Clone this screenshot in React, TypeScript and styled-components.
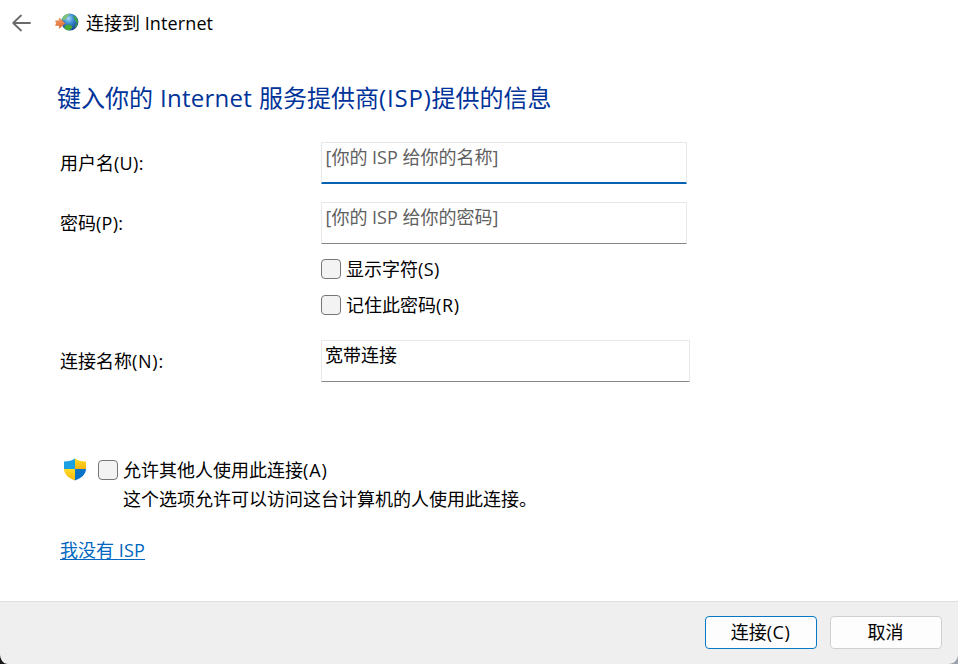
import React from "react";
import styled, { createGlobalStyle } from "styled-components";

const GlobalStyle = createGlobalStyle`
  *, *::before, *::after { box-sizing: border-box; }
  html, body { margin: 0; background: #fff; }
  body {
    font-family: "Open Sans", "Noto Sans CJK SC", sans-serif;
    font-size: 18px;
    font-weight: 400;
    color: #000;
    overflow: hidden;
  }
`;

const Window = styled.div`
  width: 958px;
  height: 664px;
  display: flex;
  flex-direction: column;
  background: #fff;
`;

const TitleBar = styled.header`
  height: 46px;
  padding-left: 12px;
  display: flex;
  align-items: center;
  line-height: 24px;
`;

const BackButton = styled.button`
  width: 19px;
  height: 20px;
  margin-right: 24px;
  padding: 0;
  border: 0;
  background: none;
  display: flex;
  align-items: center;
`;

const TitleText = styled.span`
  margin-left: 7px;
  white-space: nowrap;
`;

const Latin = styled.span<{ $spacing?: number }>`
  letter-spacing: ${(p) => p.$spacing ?? 0}px;
`;

const Content = styled.main`
  flex: 1;
  min-height: 0;
  padding: 36px 0 0 60px;
  display: flex;
  flex-direction: column;
  align-items: flex-start;
`;

const Heading = styled.h1`
  margin: 0 0 28px -3px;
  font-size: 24px;
  font-weight: 400;
  line-height: 32px;
  color: #003399;
  word-spacing: 0.8px;
  white-space: nowrap;
`;

const Credentials = styled.div`
  display: grid;
  row-gap: 18px;
`;

const FieldRow = styled.div`
  display: grid;
  grid-template-columns: 261px auto;
`;

const Label = styled.label`
  line-height: 42px;
  white-space: nowrap;
`;

const Field = styled.div<{ $focused?: boolean; $wide?: boolean; $filled?: boolean }>`
  width: ${(p) => (p.$wide ? 369 : 366)}px;
  height: 42px;
  padding: ${(p) => (p.$filled ? "2px 3px" : "2px 3.5px")};
  border: 1px solid #e8e8e8;
  border-bottom: ${(p) => (p.$focused ? "2px solid #0563b1" : "1px solid #868686")};
  border-radius: 1px;
  color: ${(p) => (p.$filled ? "#000" : "#606060")};
  line-height: 24px;
  white-space: nowrap;
`;

const Options = styled.div`
  margin: 13px 0 23px 261px;
  display: grid;
  gap: 12px;
`;

const Option = styled.label`
  height: 24px;
  display: flex;
  align-items: center;
  gap: 5px;
  line-height: 24px;
  white-space: nowrap;
`;

const CheckBox = styled.input.attrs({ type: "checkbox" })`
  appearance: none;
  width: 20px;
  height: 20px;
  margin: 0;
  border: 1px solid #767676;
  border-radius: 4px;
  background: #f3f3f3;
`;

const Sharing = styled.div`
  margin: 76px 0 0 3px;
  display: grid;
  grid-template-columns: 35px auto;
  row-gap: 5px;
  align-items: center;
`;

const Description = styled.div`
  grid-column: 2;
  margin-left: 25px;
  line-height: 24px;
  white-space: nowrap;
`;

const Link = styled.a`
  margin-top: 27px;
  line-height: 24px;
  color: #0067c0;
  text-decoration: underline;
  text-decoration-thickness: 1px;
  text-underline-offset: 2px;
  white-space: nowrap;
`;

const Footer = styled.footer`
  position: relative;
  height: 63px;
  padding: 14px 16px 0 0;
  display: flex;
  justify-content: flex-end;
  gap: 13px;
  border-top: 1px solid #dfdfdf;
  background: #efefef;
`;

const Button = styled.button<{ $primary?: boolean }>`
  width: 112px;
  height: 33px;
  padding: 0 1px 1px 0;
  border: 1px solid ${(p) => (p.$primary ? "#0878c4" : "#d0d0d0")};
  border-radius: 4px;
  background: #fdfdfd;
  color: #000;
  font: inherit;
  line-height: 30px;
`;

const Corner = styled.svg<{ $side: "left" | "right" }>`
  position: absolute;
  bottom: 0;
  ${(p) => p.$side}: 0;
`;

const BackArrow = () => (
  <svg width="19" height="18" viewBox="0 0 19 18" fill="none" stroke="#6b6b6b" strokeWidth="1.8" strokeLinecap="round" strokeLinejoin="round">
    <path d="M9 1.5 1.2 9 9 16.5M1.5 9H18" />
  </svg>
);

const GlobeIcon = () => (
  <svg width="24" height="20" viewBox="0 0 24 20">
    <defs>
      <radialGradient id="ocean" cx=".42" cy=".3" r=".7">
        <stop offset="0" stopColor="#a9daf6" />
        <stop offset=".4" stopColor="#3f90d4" />
        <stop offset="1" stopColor="#123a92" />
      </radialGradient>
      <linearGradient id="arrow" x1="0" y1="0" x2="0" y2="1">
        <stop offset="0" stopColor="#f7a068" />
        <stop offset="1" stopColor="#e2662a" />
      </linearGradient>
    </defs>
    <circle cx="14.8" cy="9" r="8.6" fill="url(#ocean)" />
    <path d="M7.6 4.5C9.2 1.8 11.2.9 13.8.7l.8 1.1-2 1.5-1 2.3-2 1.4-2.4.2Z" fill="#7fbf7c" />
    <path d="m18.8 2.2 2.8 2.2 1.6 4-.6 2-1.8-1.2-.5-2.4-1.9-2Z" fill="#3ea645" />
    <path d="m10.2 12.4 3.4-1 3.4 1.6.3 1.8-2.6 2.6-3-.3-2.6-2Z" fill="#43aa38" />
    <path d="m20.8 10.8 2.1-.5-1.5 3.5-1.9 1.3Z" fill="#329653" />
    <path d="M.5 7.8h3.8V5l5.8 5.2-5.8 5.2v-2.9H.5l1-2.3Z" fill="url(#arrow)" stroke="#cf6c38" strokeWidth=".5" strokeLinejoin="round" />
  </svg>
);

const ShieldIcon = () => (
  <svg width="24" height="24" viewBox="0 0 24 24">
    <defs>
      <clipPath id="shield">
        <path d="M12 .5c2.7 2.1 6 3 11 3v7c0 6-4.7 9.8-11 12C5.7 20.3 1 16.5 1 10.5v-7c5 0 8.3-.9 11-3Z" />
      </clipPath>
      <linearGradient id="gold" x1="0" y1="0" x2="0" y2="1">
        <stop offset="0" stopColor="#ffdc22" />
        <stop offset="1" stopColor="#f6b50f" />
      </linearGradient>
    </defs>
    <g clipPath="url(#shield)">
      <path d="M0 0h12v11H0Z" fill="#1ba0e3" />
      <path d="M12 0h12v11H12Z" fill="url(#gold)" />
      <path d="M0 11h12v12H0Z" fill="url(#gold)" />
      <path d="M12 11h12v12H12Z" fill="#0872c6" />
    </g>
  </svg>
);

export default function App() {
  return (
    <>
      <GlobalStyle />
      <Window>
        <TitleBar>
          <BackButton aria-label="返回"><BackArrow /></BackButton>
          <GlobeIcon />
          <TitleText>连接到 <Latin $spacing={0.12}>Internet</Latin></TitleText>
        </TitleBar>
        <Content>
          <Heading>
            键入你的 <Latin $spacing={0.25}>Internet</Latin> 服务提供商<Latin $spacing={0.8}>(ISP)</Latin>提供的信息
          </Heading>
          <Credentials>
            <FieldRow>
              <Label>用户名<Latin $spacing={0.3}>(U):</Latin></Label>
              <Field $focused>[你的 <Latin>ISP</Latin> 给你的名称]</Field>
            </FieldRow>
            <FieldRow>
              <Label>密码<Latin $spacing={0.3}>(P):</Latin></Label>
              <Field>[你的 <Latin>ISP</Latin> 给你的密码]</Field>
            </FieldRow>
          </Credentials>
          <Options>
            <Option><CheckBox /><span>显示字符<Latin $spacing={0.4}>(S)</Latin></span></Option>
            <Option><CheckBox /><span>记住此密码<Latin $spacing={0.7}>(R)</Latin></span></Option>
          </Options>
          <FieldRow>
            <Label>连接名称<Latin $spacing={0.75}>(N):</Latin></Label>
            <Field $wide $filled>宽带连接</Field>
          </FieldRow>
          <Sharing>
            <ShieldIcon />
            <Option><CheckBox /><span>允许其他人使用此连接<Latin $spacing={0.9}>(A)</Latin></span></Option>
            <Description>这个选项允许可以访问这台计算机的人使用此连接。</Description>
          </Sharing>
          <Link>我没有 <Latin $spacing={0.2}>ISP</Latin></Link>
        </Content>
        <Footer>
          <Button $primary>连接<Latin $spacing={0.5}>(C)</Latin></Button>
          <Button>取消</Button>
          <Corner $side="left" width="8" height="10" viewBox="0 0 8 10"><path d="M0 0c0 5 3 10 8 10H0Z" fill="#171717" /></Corner>
          <Corner $side="right" width="10" height="10" viewBox="0 0 10 10"><path d="M10 0c0 6-4 10-10 10h10Z" fill="#99a1aa" /></Corner>
        </Footer>
      </Window>
    </>
  );
}
